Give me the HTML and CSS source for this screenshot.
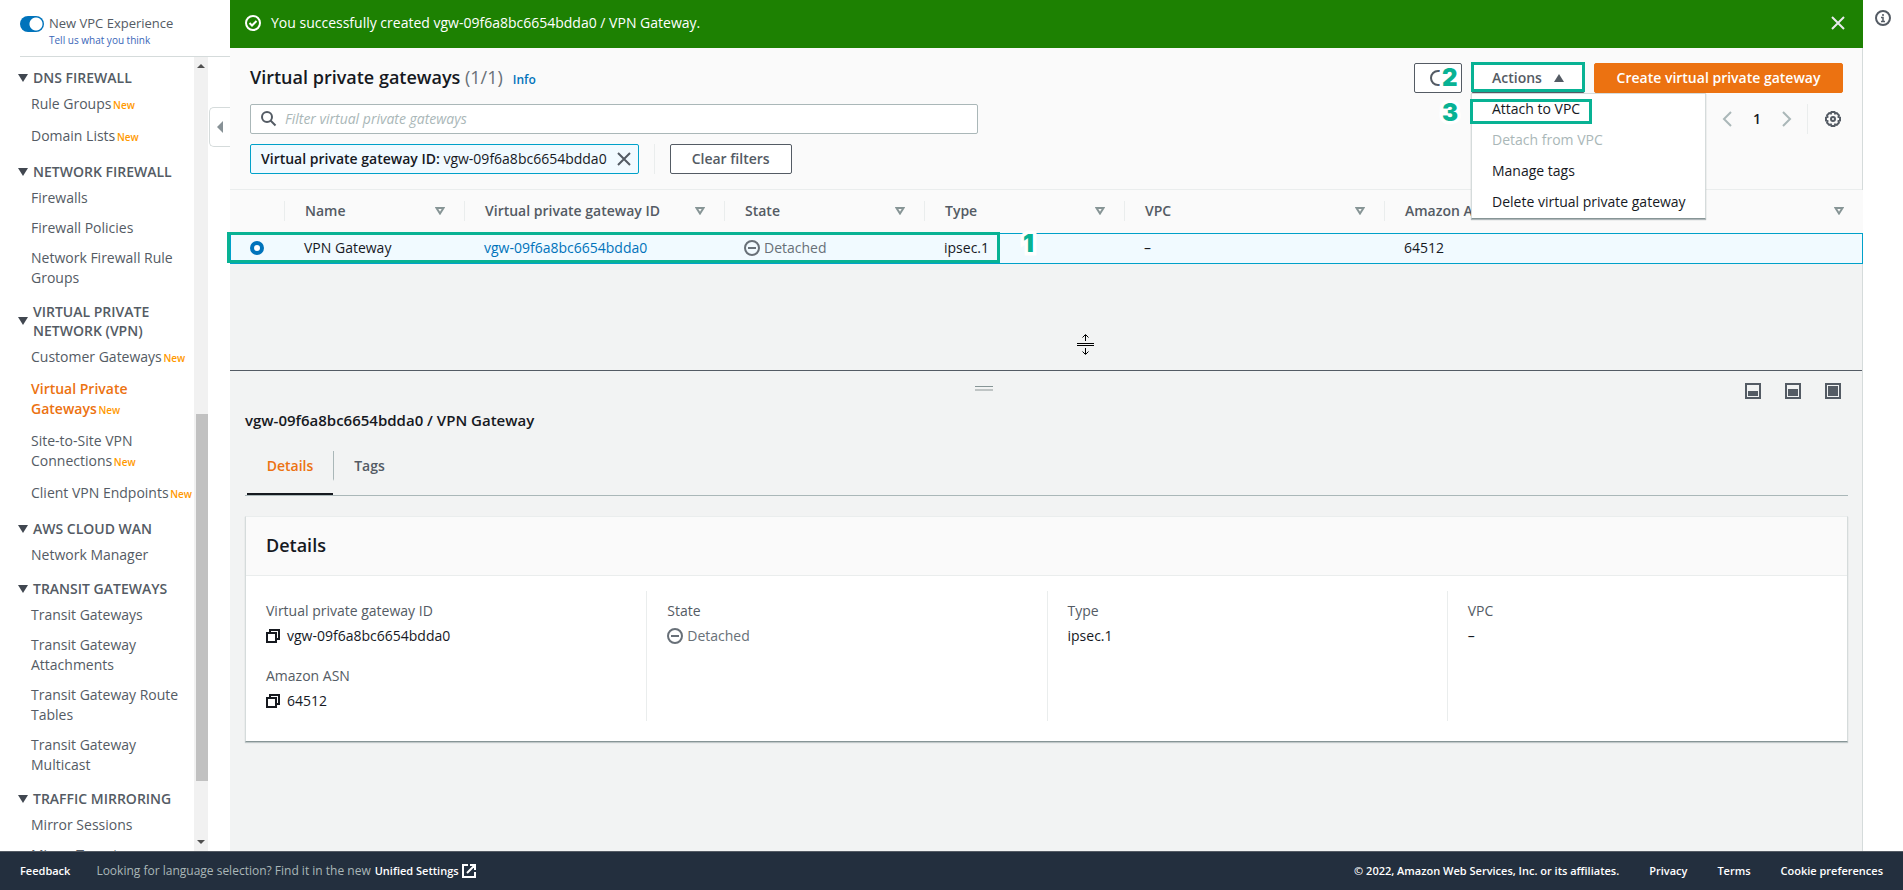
FILE: index.html
```html
<!DOCTYPE html>
<html lang="en">
<head>
  <meta charset="UTF-8" />
  <meta name="viewport" content="width=device-width, initial-scale=1.0"/>
  <title>Virtual private gateways | VPC Management Console</title>
  <link rel="stylesheet" href="styles.css">
</head>
<body>
  <div class="layout">
    <!-- Sidebar -->
    <aside class="sidebar">
      <div class="experience">
        <input type="checkbox" class="toggle" id="newExperience" checked />
        <div>
          <label for="newExperience">New VPC Experience</label>
          <a href="#" class="feedback-link">Tell us what you think</a>
        </div>
      </div>
      <div class="nav-wrap">
        <nav class="nav">
          <h3>DNS FIREWALL</h3>
          <a href="#" class="has-new">Rule Groups <span class="new">New</span></a>
          <a href="#" class="has-new">Domain Lists <span class="new">New</span></a>
          <h3>NETWORK FIREWALL</h3>
          <a href="#">Firewalls</a>
          <a href="#">Firewall Policies</a>
          <a href="#">Network Firewall Rule<br>Groups</a>
          <h3>VIRTUAL PRIVATE<br>NETWORK (VPN)</h3>
          <a href="#" class="has-new">Customer Gateways <span class="new">New</span></a>
          <a href="#" class="has-new active">Virtual Private<br>Gateways <span class="new">New</span></a>
          <a href="#" class="has-new">Site-to-Site VPN<br>Connections <span class="new">New</span></a>
          <a href="#" class="has-new">Client VPN Endpoints <span class="new">New</span></a>
          <h3>AWS CLOUD WAN</h3>
          <a href="#">Network Manager</a>
          <h3>TRANSIT GATEWAYS</h3>
          <a href="#">Transit Gateways</a>
          <a href="#">Transit Gateway<br>Attachments</a>
          <a href="#">Transit Gateway Route<br>Tables</a>
          <a href="#">Transit Gateway<br>Multicast</a>
          <h3>TRAFFIC MIRRORING</h3>
          <a href="#">Mirror Sessions</a>
          <a href="#">Mirror Targets</a>
        </nav>
        <div class="scrollbar">
          <svg width="8" height="4" viewBox="0 0 8 4"><path d="M4 0l4 4H0z" fill="#505050"/></svg>
          <div class="track"><div class="thumb"></div></div>
          <svg width="8" height="4" viewBox="0 0 8 4"><path d="M0 0h8L4 4z" fill="#505050"/></svg>
        </div>
        <button class="collapse" aria-label="Close navigation">
          <svg width="6" height="12" viewBox="0 0 6 12"><path d="M6 0v12L0 6z" fill="#879196"/></svg>
        </button>
      </div>
    </aside>

    <main class="main">
      <!-- Success message -->
      <div class="flash">
        <svg width="16" height="16" viewBox="0 0 16 16" fill="none" stroke="#fff" stroke-width="2"><circle cx="8" cy="8" r="7"/><path d="M4.500 8l2.500 2.500 4.500-4.500"/></svg>
        <span>You successfully created vgw-09f6a8bc6654bdda0 / VPN Gateway.</span>
        <button class="icon-btn" aria-label="Dismiss">
          <svg width="14" height="14" viewBox="0 0 14 14" fill="none" stroke="#e9ebed" stroke-width="2"><path d="M1 1l12 12M13 1L1 13"/></svg>
        </button>
      </div>

      <!-- Gateways list -->
      <section class="list-header">
        <div class="title-row">
          <h1>Virtual private gateways <span class="count">(1/1)</span></h1>
          <a href="#" class="info">Info</a>
          <div class="actions">
            <button class="btn refresh" aria-label="Refresh">
              <svg width="16" height="16" viewBox="0 0 16 16" fill="none" stroke="#545b64" stroke-width="2"><path d="M10 1H8a7 7 0 0 0 0 14h2"/></svg>
              <span class="step step-2">2</span>
            </button>
            <div class="menu-wrap">
              <button class="btn menu-btn">Actions
                <svg width="10" height="8" viewBox="0 0 10 8"><path d="M5 0l5 8H0z" fill="#545b64"/></svg>
              </button>
              <div class="mark mark-actions"></div>
              <div class="menu">
                <button>Attach to VPC</button>
                <button disabled>Detach from VPC</button>
                <button>Manage tags</button>
                <button>Delete virtual private gateway</button>
                <div class="mark mark-attach"></div>
                <span class="step step-3">3</span>
              </div>
            </div>
            <button class="btn primary">Create virtual private gateway</button>
          </div>
        </div>

        <div class="filter-row">
          <div class="search">
            <svg width="16" height="16" viewBox="0 0 16 16" fill="none" stroke="#545b64" stroke-width="2"><circle cx="6" cy="6" r="5"/><path d="M9.500 9.500l5 5"/></svg>
            <input type="text" placeholder="Filter virtual private gateways" aria-label="Filter virtual private gateways" />
          </div>
          <div class="pager">
            <button class="icon-btn" aria-label="Previous page">
              <svg width="10" height="16" viewBox="0 0 10 16" fill="none" stroke="#aab7b8" stroke-width="2"><path d="M9 1L2 8l7 7"/></svg>
            </button>
            <span class="page">1</span>
            <button class="icon-btn" aria-label="Next page">
              <svg width="10" height="16" viewBox="0 0 10 16" fill="none" stroke="#aab7b8" stroke-width="2"><path d="M1 1l7 7-7 7"/></svg>
            </button>
            <span class="divider"></span>
            <button class="icon-btn" aria-label="Preferences">
              <svg width="16" height="16" viewBox="0 0 16 16" fill="none" stroke="#545b64" stroke-width="2"><path d="M6.500 1h3l.6 1.500 1.700-.4 2.100 2.100-.4 1.700 1.500.6v3l-1.500.6.4 1.700-2.100 2.100-1.700-.4-.6 1.500h-3l-.6-1.500-1.700.4-2.100-2.100.4-1.700L1 9.500v-3l1.500-.6-.4-1.700 2.100-2.100 1.700.4z"/><circle cx="8" cy="8" r="2"/></svg>
            </button>
          </div>
        </div>

        <div class="token-row">
          <div class="token">
            <span><b>Virtual private gateway ID:</b> vgw-09f6a8bc6654bdda0</span>
            <button class="icon-btn" aria-label="Remove filter">
              <svg width="14" height="14" viewBox="0 0 14 14" fill="none" stroke="#545b64" stroke-width="2"><path d="M1 1l12 12M13 1L1 13"/></svg>
            </button>
          </div>
          <span class="divider"></span>
          <button class="btn clear">Clear filters</button>
        </div>
      </section>

      <div class="table-wrap">
        <table>
          <colgroup>
            <col class="c-select"><col class="c-name"><col class="c-id"><col class="c-state"><col class="c-type"><col class="c-vpc"><col>
          </colgroup>
          <thead>
            <tr>
              <th></th>
              <th><div class="th">Name <svg width="10" height="8" viewBox="0 0 10 8" fill="none" stroke="#879596" stroke-width="2"><path d="M1.500 1h7L5 6.500z"/></svg></div></th>
              <th><div class="th">Virtual private gateway ID <svg width="10" height="8" viewBox="0 0 10 8" fill="none" stroke="#879596" stroke-width="2"><path d="M1.500 1h7L5 6.500z"/></svg></div></th>
              <th><div class="th">State <svg width="10" height="8" viewBox="0 0 10 8" fill="none" stroke="#879596" stroke-width="2"><path d="M1.500 1h7L5 6.500z"/></svg></div></th>
              <th><div class="th">Type <svg width="10" height="8" viewBox="0 0 10 8" fill="none" stroke="#879596" stroke-width="2"><path d="M1.500 1h7L5 6.500z"/></svg></div></th>
              <th><div class="th">VPC <svg width="10" height="8" viewBox="0 0 10 8" fill="none" stroke="#879596" stroke-width="2"><path d="M1.500 1h7L5 6.500z"/></svg></div></th>
              <th><div class="th">Amazon ASN <svg width="10" height="8" viewBox="0 0 10 8" fill="none" stroke="#879596" stroke-width="2"><path d="M1.500 1h7L5 6.500z"/></svg></div></th>
            </tr>
          </thead>
          <tbody>
            <tr>
              <td class="select"><input type="radio" name="gateway" aria-label="VPN Gateway" checked /></td>
              <td>VPN Gateway</td>
              <td><a href="#">vgw-09f6a8bc6654bdda0</a></td>
              <td>
                <span class="status"><svg width="16" height="16" viewBox="0 0 16 16" fill="none" stroke="#687078" stroke-width="2"><circle cx="8" cy="8" r="7"/><path d="M4 8h8"/></svg>Detached</span>
              </td>
              <td>ipsec.1</td>
              <td>–</td>
              <td>64512</td>
            </tr>
          </tbody>
        </table>
        <div class="mark mark-row"></div>
        <span class="step step-1">1</span>
        <svg class="cursor" width="17" height="21" viewBox="0 0 17 21" fill="none" stroke="#000"><path d="M0 9.500h17M0 11.500h17M8.500 1v6M8.500 14v6M5.500 3.500l3-3 3 3M5.500 17.500l3 3 3-3"/></svg>
      </div>

      <!-- Split panel -->
      <section class="split">
        <div class="split-bar">
          <span class="handle"></span>
          <div class="sizes">
            <button class="icon-btn" aria-label="Small panel"><svg width="16" height="16" viewBox="0 0 16 16"><path d="M1 1h14v14H1z" fill="none" stroke="#545b64" stroke-width="2"/><path d="M3 8h10v5H3z" fill="#545b64"/></svg></button>
            <button class="icon-btn" aria-label="Medium panel"><svg width="16" height="16" viewBox="0 0 16 16"><path d="M1 1h14v14H1z" fill="none" stroke="#545b64" stroke-width="2"/><path d="M3 6h10v7H3z" fill="#545b64"/></svg></button>
            <button class="icon-btn" aria-label="Full panel"><svg width="16" height="16" viewBox="0 0 16 16"><path d="M1 1h14v14H1z" fill="none" stroke="#545b64" stroke-width="2"/><path d="M3 3h10v10H3z" fill="#545b64"/></svg></button>
          </div>
        </div>
        <h2>vgw-09f6a8bc6654bdda0 / VPN Gateway</h2>
        <div class="tabs">
          <button class="tab active">Details</button>
          <button class="tab">Tags</button>
        </div>
        <div class="panel">
          <h2 class="panel-title">Details</h2>
          <div class="panel-body">
            <dl>
              <dt>Virtual private gateway ID</dt>
              <dd><svg width="14" height="14" viewBox="0 0 14 14" fill="none" stroke="#16191f" stroke-width="2"><path d="M1 4h9v9H1zM4 4V1h9v9h-3"/></svg>vgw-09f6a8bc6654bdda0</dd>
              <dt>Amazon ASN</dt>
              <dd><svg width="14" height="14" viewBox="0 0 14 14" fill="none" stroke="#16191f" stroke-width="2"><path d="M1 4h9v9H1zM4 4V1h9v9h-3"/></svg>64512</dd>
            </dl>
            <dl>
              <dt>State</dt>
              <dd><span class="status"><svg width="16" height="16" viewBox="0 0 16 16" fill="none" stroke="#687078" stroke-width="2"><circle cx="8" cy="8" r="7"/><path d="M4 8h8"/></svg>Detached</span></dd>
            </dl>
            <dl>
              <dt>Type</dt>
              <dd>ipsec.1</dd>
            </dl>
            <dl>
              <dt>VPC</dt>
              <dd>–</dd>
            </dl>
          </div>
        </div>
      </section>
    </main>

    <!-- Help drawer -->
    <aside class="help">
      <button class="icon-btn" aria-label="Info">
        <svg width="16" height="16" viewBox="0 0 16 16" fill="none" stroke="#545b64" stroke-width="2"><circle cx="8" cy="8" r="7"/><path d="M8 4v2M6 7.500h2V11M6 11.500h4" stroke-width="1.500"/></svg>
      </button>
    </aside>
  </div>

  <footer class="footer">
    <a href="#">Feedback</a>
    <span class="language">Looking for language selection? Find it in the new</span>
    <a href="#" class="unified">Unified Settings
      <svg width="14" height="14" viewBox="0 0 14 14" fill="none" stroke="#fff" stroke-width="2"><path d="M6 1H1v12h12V8M8 1h5v5M13 1L5 9"/></svg>
    </a>
    <span class="copyright">© 2022, Amazon Web Services, Inc. or its affiliates.</span>
    <a href="#">Privacy</a>
    <a href="#">Terms</a>
    <a href="#">Cookie preferences</a>
  </footer>
</body>
</html>
```

FILE: styles.css
```css
* {
  box-sizing: border-box;
}

body {
  margin: 0;
  height: 100vh;
  display: flex;
  flex-direction: column;
  font-family: "Open Sans", "Noto Sans", sans-serif;
  font-size: 14px;
  line-height: 20px;
  color: #16191f;
  background: #fff;
  overflow: hidden;
}

button,
input {
  font: inherit;
  color: inherit;
}

button {
  cursor: pointer;
}

a {
  color: #0073bb;
  text-decoration: none;
}

svg {
  display: block;
  flex-shrink: 0;
}

h1,
h2,
h3,
dl,
dd {
  margin: 0;
}

b {
  font-weight: 600;
}

.layout {
  flex: 1;
  min-height: 0;
  display: flex;
}

.icon-btn {
  padding: 0;
  border: none;
  background: none;
}

/* Sidebar */
.sidebar {
  width: 230px;
  flex-shrink: 0;
  display: flex;
  flex-direction: column;
}

.experience {
  display: flex;
  gap: 5px;
  height: 57px;
  margin-left: 20px;
  padding-top: 13px;
  border-bottom: 1px solid #d5dbdb;
  color: #545b64;
}

.experience label {
  display: block;
  font-size: 13px;
}

.feedback-link {
  display: block;
  font-size: 10px;
  line-height: 15px;
  color: #3a66b8;
}

.toggle {
  appearance: none;
  width: 24px;
  height: 16px;
  margin: 3px 0 0;
  border-radius: 8px;
  background: radial-gradient(circle at 16px 8px, #fff 6px, #0073bb 7px);
}

.nav-wrap {
  flex: 1;
  min-height: 0;
  display: flex;
}

.nav {
  width: 194px;
  padding: 11px 0 0 18px;
  overflow: hidden;
  white-space: nowrap;
}

.nav h3 {
  display: flex;
  align-items: center;
  gap: 5px;
  margin: 14px 0 7px;
  font-size: 14px;
  font-weight: 600;
  line-height: 19px;
  color: #545b64;
}

.nav h3:first-child {
  margin-top: 0;
}

.nav h3::before {
  content: "";
  border: 5px solid transparent;
  border-top: 8px solid #414750;
  border-bottom: 0;
}

.nav a {
  display: block;
  margin: 0 0 10px 13px;
  color: #545b64;
}

.nav .has-new {
  padding-bottom: 2px;
}

.nav .active {
  color: #ec7211;
  font-weight: 600;
}

.new {
  margin-left: -2px;
  font-size: 10px;
  line-height: 10px;
  font-weight: 600;
  color: #ff9900;
}

.scrollbar {
  width: 14px;
  display: flex;
  flex-direction: column;
  align-items: center;
  padding: 7px 0;
  background: #f1f1f1;
}

.track {
  flex: 1;
  width: 12px;
  margin: 4px 0 4px 2px;
  display: flex;
  flex-direction: column;
  justify-content: flex-end;
}

.thumb {
  height: 48%;
  margin-bottom: 55px;
  background: #c1c1c1;
}

.collapse {
  width: 21px;
  height: 40px;
  margin: 50px 0 0 1px;
  padding: 0 0 0 7px;
  border: 1px solid #d5dbdb;
  border-right: none;
  border-radius: 5px 0 0 5px;
  background: #fff;
}

/* Main */
.main {
  flex: 1;
  min-width: 0;
  display: flex;
  flex-direction: column;
  background: #f2f3f3;
  border-right: 1px solid #d5dbdb;
}

.flash {
  display: flex;
  align-items: center;
  gap: 10px;
  height: 48px;
  margin-right: -1px;
  padding: 0 18px 2px 15px;
  background: #1d8102;
  color: #fff;
  font-weight: 500;
}

.flash button {
  margin-left: auto;
}

.list-header {
  padding: 15px 19px 15px 20px;
  background: #fafafa;
  border-bottom: 1px solid #eaeded;
}

.title-row,
.actions,
.filter-row,
.token-row,
.pager {
  display: flex;
  align-items: center;
}

h1 {
  font-size: 18px;
  font-weight: 600;
  line-height: 28px;
  padding-bottom: 2px;
}

.count {
  color: #687078;
  font-weight: 400;
}

.info {
  margin: 3px 0 0 10px;
  font-size: 12px;
  font-weight: 600;
}

.actions {
  gap: 9px;
  margin-left: auto;
}

.btn {
  height: 30px;
  padding: 0 20px;
  border: 1px solid #545b64;
  border-radius: 2px;
  background: #fff;
  color: #545b64;
  font-weight: 600;
}

.clear {
  width: 122px;
}

.refresh {
  position: relative;
  width: 48px;
  padding: 0 15px;
}

.menu-wrap {
  position: relative;
}

.menu-btn {
  display: flex;
  align-items: center;
  justify-content: space-between;
  width: 114px;
}

.primary {
  width: 249px;
  padding: 0;
  border-color: #ec7211;
  background: #ec7211;
  color: #fff;
}

.menu {
  position: absolute;
  z-index: 2;
  top: 30px;
  left: 0;
  width: 235px;
  height: 126px;
  border: 1px solid #d5dbdb;
  border-bottom-color: #879596;
  background: #fff;
  box-shadow: 0 1px 1px rgba(0, 28, 36, 0.3);
}

.menu button {
  display: block;
  width: 100%;
  height: 31px;
  padding: 0 0 2px 20px;
  border: none;
  background: none;
  text-align: left;
  white-space: nowrap;
}

.menu button:disabled {
  color: #aab7b8;
}

.filter-row {
  justify-content: space-between;
  margin-top: 11px;
}

.search {
  display: flex;
  align-items: center;
  gap: 8px;
  width: 728px;
  height: 30px;
  padding-left: 10px;
  border: 1px solid #aab7b8;
  border-radius: 2px;
  background: #fff;
}

.search input {
  flex: 1;
  padding: 0;
  border: none;
  outline: none;
  background: none;
}

.search input::placeholder {
  color: #aab7b8;
  font-style: italic;
}

.pager {
  padding-right: 2px;
}

.page {
  width: 50px;
  text-align: center;
  font-weight: 600;
}

.divider {
  width: 1px;
  height: 30px;
  background: #eaeded;
}

.pager .divider {
  margin: 0 17px 0 15px;
}

.token-row {
  gap: 15px;
  margin-top: 10px;
}

.token {
  display: flex;
  align-items: center;
  gap: 10px;
  height: 30px;
  padding: 0 7px 0 10px;
  border: 1px solid #00a1c9;
  border-radius: 2px;
  background: #f1faff;
}

/* Table */
.table-wrap {
  position: relative;
  height: 180px;
  margin-right: -1px;
}

table {
  width: 100%;
  table-layout: fixed;
  border-collapse: separate;
  border-spacing: 0;
}

.c-select {
  width: 54px;
}

.c-name {
  width: 180px;
}

.c-id,
.c-vpc {
  width: 260px;
}

.c-state,
.c-type {
  width: 200px;
}

th {
  height: 43px;
  padding: 0 0 2px;
  background: #fafafa;
  color: #545b64;
  font-weight: 600;
}

.th {
  display: flex;
  align-items: center;
  justify-content: space-between;
  padding: 0 19px 0 20px;
  border-left: 1px solid #eaeded;
}

td {
  height: 31px;
  padding: 0 0 2px 20px;
  border: solid #00a1c9;
  border-width: 1px 0;
  background: #f1faff;
}

td:first-child {
  padding-left: 19px;
  border-left-width: 1px;
}

td:last-child {
  border-right-width: 1px;
}

.select input {
  appearance: none;
  display: block;
  width: 14px;
  height: 14px;
  margin: 0;
  border: 4px solid #0073bb;
  border-radius: 50%;
  background: #fff;
}

.status {
  display: flex;
  align-items: center;
  gap: 4px;
  color: #687078;
}

/* Numbered walkthrough marks */
.mark {
  position: absolute;
  border: 3px solid #08b294;
  pointer-events: none;
}

.mark-actions {
  inset: -1px 0 1px;
}

.mark-attach {
  top: 5px;
  left: -2px;
  width: 122px;
  height: 25px;
}

.mark-row {
  top: 42px;
  left: -3px;
  width: 773px;
  height: 31px;
}

.step {
  position: absolute;
  font-family: Inter, sans-serif;
  font-size: 24px;
  font-weight: 900;
  line-height: 24px;
  color: #08b294;
  -webkit-text-stroke: 7px #fff;
  paint-order: stroke fill;
}

.step-1 {
  top: 42px;
  left: 793px;
}

.step-2 {
  top: 2px;
  left: 27px;
}

.step-3 {
  top: 7px;
  left: -30px;
}

.cursor {
  position: absolute;
  top: 144px;
  left: 847px;
}

/* Split panel */
.split {
  flex: 1;
  padding: 0 14px 0 15px;
  border-top: 1px solid #545b64;
}

.split-bar {
  display: grid;
  grid-template-columns: 1fr auto 1fr;
  height: 40px;
}

.handle {
  grid-column: 2;
  width: 18px;
  height: 5px;
  margin: 15px 126px 0 0;
  border-top: 1px solid #879596;
  border-bottom: 2px solid #bfc4c4;
}

.sizes {
  display: flex;
  justify-content: flex-end;
  gap: 24px;
  height: 16px;
  margin: 12px 7px 0 0;
}

.split h2 {
  padding-bottom: 2px;
  font-size: 15px;
  font-weight: 600;
  line-height: 18px;
}

.tabs {
  display: flex;
  margin-top: 14px;
  height: 51px;
  padding-left: 2px;
  border-bottom: 1px solid #aab7b8;
}

.tab {
  display: flex;
  justify-content: center;
  width: 86px;
  padding: 11px 0 0;
  border: none;
  border-bottom: 2px solid transparent;
  background: none;
  color: #545b64;
  font-weight: 600;
}

.tab.active {
  color: #ec7211;
  border-bottom-color: #16191f;
}

.tab + .tab {
  width: 72px;
  height: 30px;
  margin-top: 6px;
  padding-top: 5px;
  border-left: 1px solid #aab7b8;
}

.panel {
  margin-top: 20px;
  border: 1px solid #d5dbdb;
  border-top-color: #eaeded;
  border-bottom-color: #879596;
  background: #fff;
  box-shadow: 0 1px 1px rgba(0, 28, 36, 0.2);
}

.split .panel-title {
  padding: 0 20px 2px;
  font-size: 18px;
  line-height: 56px;
  background: #fafafa;
  border-bottom: 1px solid #eaeded;
}

.panel-body {
  display: grid;
  grid-template-columns: repeat(4, 1fr);
  padding: 15px 0 20px;
}

.panel-body dl {
  height: 130px;
  padding: 10px 0 0 20px;
}

.panel-body dl + dl {
  border-left: 1px solid #eaeded;
}

dt {
  color: #545b64;
}

dd {
  display: flex;
  align-items: center;
  gap: 7px;
  margin: 5px 0 20px;
}

/* Right rail and footer */
.help {
  width: 40px;
  flex-shrink: 0;
  padding: 10px 12px;
}

.footer {
  display: flex;
  align-items: center;
  height: 39px;
  padding: 0 20px;
  border-top: 1px solid #545b64;
  background: #232f3e;
  color: #fff;
  font-size: 11px;
  font-weight: 600;
  white-space: nowrap;
}

.footer a {
  color: #fff;
}

.language {
  margin: 0 4px 0 26px;
  color: #aab7b8;
  font-size: 12px;
  font-weight: 400;
}

.unified {
  display: flex;
  align-items: center;
  gap: 3px;
}

.copyright {
  margin-left: auto;
}

.copyright ~ a {
  margin-left: 30px;
}
```
